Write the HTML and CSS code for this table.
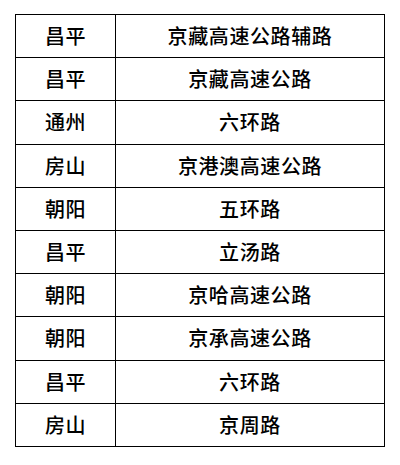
FILE: index.html
```html
<!DOCTYPE html>
<html lang="zh-CN">
<head>
<meta charset="utf-8">
<link rel="stylesheet" href="styles.css">
</head>
<body>
<table class="roads">
  <colgroup><col class="c1"><col class="c2"></colgroup>
  <tbody>
    <tr><td>昌平</td><td>京藏高速公路辅路</td></tr>
    <tr><td>昌平</td><td>京藏高速公路</td></tr>
    <tr><td>通州</td><td>六环路</td></tr>
    <tr><td>房山</td><td>京港澳高速公路</td></tr>
    <tr><td>朝阳</td><td>五环路</td></tr>
    <tr><td>昌平</td><td>立汤路</td></tr>
    <tr><td>朝阳</td><td>京哈高速公路</td></tr>
    <tr><td>朝阳</td><td>京承高速公路</td></tr>
    <tr><td>昌平</td><td>六环路</td></tr>
    <tr><td>房山</td><td>京周路</td></tr>
  </tbody>
</table>
</body>
</html>
```
FILE: styles.css
```css
html, body {
  margin: 0;
  padding: 0;
  background: #fff;
}
body {
  padding: 14px 15px;
  font-family: "Noto Sans CJK SC", "Noto Sans", sans-serif;
  color: #000;
}
.roads {
  border-collapse: collapse;
  width: 370px;
  height: 433px;
  table-layout: fixed;
}
.c1 { width: 100px; }
.roads td {
  border: 1px solid #000;
  padding: 0;
  text-align: center;
  vertical-align: middle;
  font-size: 20px;
  font-weight: 500;
  line-height: 1;
  letter-spacing: 0.6px;
}
```
